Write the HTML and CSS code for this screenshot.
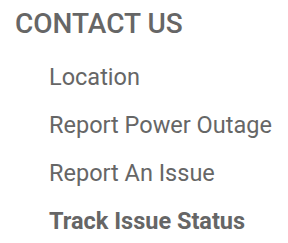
FILE: index.html
```html
<!DOCTYPE html>
<html lang="en">
<head>
  <meta charset="UTF-8">
  <title>Contact Us</title>
  <link rel="stylesheet" href="styles.css">
</head>
<body>
  <div class="footer-col">
    <h3 class="footer-title">CONTACT US</h3>
    <ul class="footer-links">
      <li><a href="#">Location</a></li>
      <li><a href="#">Report Power Outage</a></li>
      <li><a href="#">Report An Issue</a></li>
      <li><a href="#" class="active">Track Issue Status</a></li>
    </ul>
  </div>
</body>
</html>
```

FILE: styles.css
```css
body {
  margin: 0;
  background: #fff;
  font-family: Roboto, "Liberation Sans", sans-serif;
  color: #666;
}

.footer-col {
  padding: 7px 0 0 15px;
}

.footer-title {
  margin: 0;
  font-size: 28px;
  font-weight: 500;
  line-height: 34px;
  color: #666;
}

.footer-links {
  list-style: none;
  margin: 0;
  padding: 12px 0 0 34px;
  font-size: 23.5px;
}

.footer-links li {
  line-height: 48px;
}

.footer-links a {
  color: #666;
  text-decoration: none;
}

.footer-links a.active {
  font-weight: 700;
}
```
